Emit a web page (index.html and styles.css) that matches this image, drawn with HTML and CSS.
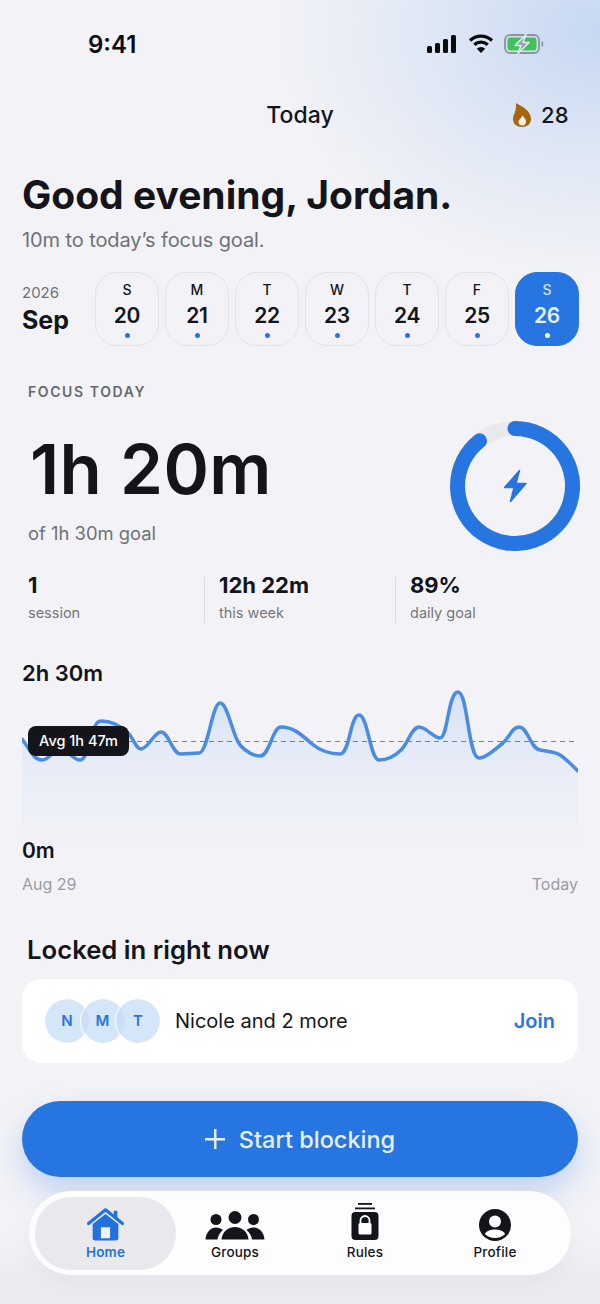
FILE: index.html

```html
<!DOCTYPE html>
<html>
	<head>
		<title>Today</title>
		<meta charset="UTF-8">
		<link rel="stylesheet" href="styles.css">
	</head>
	<body>
		<div id="screen">
			<!-- status bar -->
			<div class="status">
				<span class="clock">9:41</span>
				<div class="status-icons">
					<svg width="32" height="20" viewBox="0 0 32 20"><rect x="1" y="12" width="5" height="7" rx="1.5"/><rect x="9" y="9" width="5" height="10" rx="1.5"/><rect x="17" y="5" width="5" height="14" rx="1.5"/><rect x="25" y="1" width="5" height="18" rx="1.5"/></svg>
					<svg width="26" height="20" viewBox="0 0 26 20"><path d="M2 6.5 a16 16 0 0 1 22 0" class="wifi"/><path d="M6.3 10.8 a10 10 0 0 1 13.4 0" class="wifi"/><path d="M13 19 l-4.2 -4.3 a6 6 0 0 1 8.4 0 z"/></svg>
					<svg width="41" height="20" viewBox="0 0 41 20">
						<rect x="1" y="1" width="34" height="18" rx="5" fill="none" stroke="#8e939a" stroke-width="1.8"/>
						<rect x="3.5" y="3.5" width="29" height="13" rx="3" fill="#3dc25c"/>
						<path d="M37.500 7 c2.500 .3 2.500 5.700 0 6 z" fill="#8e939a"/>
						<path d="M22 0.5 L11 11.5 H17 L14 19.5 L25 8.5 H19 Z" fill="#9aa0a8" stroke="#e4e9f4" stroke-width="1.6" stroke-linejoin="round"/>
					</svg>
				</div>
			</div>

			<div class="topbar">
				<span class="topbar-title">Today</span>
				<div class="streak">
					<svg width="18" height="24" viewBox="0 0 18 24"><path d="M3 0 C8 3 18 7 18 16 C18 21 14 24 9 24 C4 24 0 21 0 16 C0 12 3.500 9 3 0 Z" fill="#a8650f"/><path d="M9.500 12 C10 14.500 13 15.500 13 18.500 C13 21 11.500 22.500 9.500 22.500 C7 22.500 5.500 21 5.500 19 C5.500 16.500 9 15 9.500 12 Z" fill="#f7f3ec"/></svg>
					<span>28</span>
				</div>
			</div>

			<div class="greeting">
				<h1>Good evening, Jordan.</h1>
				<p>10m to today’s focus goal.</p>
			</div>

			<div class="week">
				<div class="month">
					<span class="month-year">2026</span>
					<span class="month-name">Sep</span>
				</div>
				<div class="day"><span class="day-letter">S</span><span class="day-num">20</span><i class="dot"></i></div>
				<div class="day"><span class="day-letter">M</span><span class="day-num">21</span><i class="dot"></i></div>
				<div class="day"><span class="day-letter">T</span><span class="day-num">22</span><i class="dot"></i></div>
				<div class="day"><span class="day-letter">W</span><span class="day-num">23</span><i class="dot"></i></div>
				<div class="day"><span class="day-letter">T</span><span class="day-num">24</span><i class="dot"></i></div>
				<div class="day"><span class="day-letter">F</span><span class="day-num">25</span><i class="dot"></i></div>
				<div class="day active"><span class="day-letter">S</span><span class="day-num">26</span><i class="dot"></i></div>
			</div>

			<!-- focus summary -->
			<div class="focus">
				<div class="focus-text">
					<div class="focus-label">FOCUS TODAY</div>
					<div class="focus-time">1h 20m</div>
					<div class="focus-goal">of 1h 30m goal</div>
				</div>
				<svg class="ring" width="130" height="130" viewBox="0 0 130 130">
					<circle cx="65" cy="65" r="57.500" fill="none" stroke="#e9e9ed" stroke-width="15"/>
					<path d="M65 7.500 A57.500 57.500 0 1 1 29.500 19.800" fill="none" stroke="#2775e0" stroke-width="15" stroke-linecap="round"/>
					<path d="M69.500 49.500 L54.500 66.500 H64 L60.500 80.500 L76 62.500 H66 Z" fill="#2775e0" stroke="#2775e0" stroke-width="1.500" stroke-linejoin="round"/>
				</svg>
			</div>

			<div class="stats">
				<div class="stat"><b>1</b><span>session</span></div>
				<div class="stat"><b>12h 22m</b><span>this week</span></div>
				<div class="stat"><b>89%</b><span>daily goal</span></div>
			</div>

			<!-- history chart -->
			<div class="chart">
				<div class="chart-max">2h 30m</div>
				<div class="chart-plot">
					<svg width="556" height="160" viewBox="22 688 556 160">
						<defs>
							<linearGradient id="area" x1="0" y1="0" x2="0" y2="1">
								<stop offset="0" stop-color="#d3dff5" stop-opacity=".9"/>
								<stop offset="1" stop-color="#eef1f8" stop-opacity=".3"/>
							</linearGradient>
						</defs>
						<path fill="url(#area)" d="M22 739 C30 750 34 760 42 760 C50 760 52 750 60 749 C68 748 72 760 80 760 C90 760 90 721 101 721 C112 721 122 727 128 733 C134 739 136 749 141 749 C148 749 154 732 161 732 C169 732 172 754 181 754 L199 753 C208 753 212 703 220 703 C228 703 232 735 240 745 C246 752 254 756 260 756 C270 756 272 727 281 727 C292 727 300 733 312 744 C322 752 332 754 340 754 C350 754 350 715 359 715 C368 715 370 760 379 760 C388 760 394 757 401 750 C408 743 412 727 419 727 C426 727 434 738 440 738 C448 738 448 692 458 692 C468 692 468 758 479 758 C486 758 494 750 503 743 C510 737 512 727 519 727 C528 727 530 748 540 750 C550 752 555 752 560 755 C566 759 572 765 578 771 V848 H22 Z"/>
						<line x1="128" y1="741.500" x2="575" y2="741.500" stroke="#7d7f86" stroke-width="1.200" stroke-dasharray="5 4"/>
						<path fill="none" stroke="#4a8ce4" stroke-width="3.500" stroke-linecap="round" stroke-linejoin="round" d="M22 739 C30 750 34 760 42 760 C50 760 52 750 60 749 C68 748 72 760 80 760 C90 760 90 721 101 721 C112 721 122 727 128 733 C134 739 136 749 141 749 C148 749 154 732 161 732 C169 732 172 754 181 754 L199 753 C208 753 212 703 220 703 C228 703 232 735 240 745 C246 752 254 756 260 756 C270 756 272 727 281 727 C292 727 300 733 312 744 C322 752 332 754 340 754 C350 754 350 715 359 715 C368 715 370 760 379 760 C388 760 394 757 401 750 C408 743 412 727 419 727 C426 727 434 738 440 738 C448 738 448 692 458 692 C468 692 468 758 479 758 C486 758 494 750 503 743 C510 737 512 727 519 727 C528 727 530 748 540 750 C550 752 555 752 560 755 C566 759 572 765 578 771"/>
					</svg>
					<div class="avg-tag">Avg 1h 47m</div>
				</div>
				<div class="chart-min">0m</div>
				<div class="chart-range"><span>Aug 29</span><span>Today</span></div>
			</div>

			<h2 class="locked-title">Locked in right now</h2>
			<div class="locked-card">
				<div class="avatars">
					<span class="avatar">N</span>
					<span class="avatar">M</span>
					<span class="avatar">T</span>
				</div>
				<span class="locked-names">Nicole and 2 more</span>
				<span class="join">Join</span>
			</div>

			<div class="start"><span class="start-plus"></span>Start blocking</div>

			<!-- tab bar -->
			<div class="tabs">
				<div class="tab current">
					<svg width="37" height="33" viewBox="0 0 40 36"><path d="M1.500 17 L20 2 L38.500 17" fill="none" stroke="#2272de" stroke-width="3.500" stroke-linecap="round" stroke-linejoin="round"/><rect x="29" y="3" width="4" height="8" fill="#2272de"/><path d="M6 17.500 L20 6.500 L34 17.500 V33 a2.500 2.500 0 0 1 -2.500 2.500 H8.500 A2.500 2.500 0 0 1 6 33 Z" fill="#2272de"/><rect x="15" y="21" width="10" height="12" fill="#f2f2f5"/></svg>
					<span>Home</span>
				</div>
				<div class="tab">
					<svg width="60" height="30" viewBox="0 0 60 30"><circle cx="11" cy="8.500" r="5.500"/><circle cx="30" cy="6.500" r="6.500"/><circle cx="48.500" cy="8.500" r="5.500"/><path d="M0.500 28.500 C1 21 6 16.500 11 16.500 C14 16.500 16 17.500 18 19 C15 21.500 13 24.500 12.500 28.500 Z"/><path d="M59.500 28.500 C59 21 54 16.500 48.500 16.500 C45.500 16.500 43.500 17.500 41.500 19 C44.500 21.500 46.500 24.500 47 28.500 Z"/><path d="M16.500 28.500 C17 21 23 16 30 16 C37 16 43 21 43.500 28.500 Z"/></svg>
					<span>Groups</span>
				</div>
				<div class="tab">
					<svg width="28" height="38" viewBox="0 0 28 38"><rect x="7" y="0" width="14" height="1.800"/><rect x="4" y="4.500" width="20" height="1.800"/><path d="M4.500 9 H23.500 a4 4 0 0 1 4 4 V33 a4 4 0 0 1 -4 4 H4.500 a4 4 0 0 1 -4 -4 V13 a4 4 0 0 1 4 -4 Z"/><path d="M9.500 20 V17.500 a4.500 4.500 0 0 1 9 0 V20" fill="none" stroke="#fff" stroke-width="1.800"/><rect x="7.500" y="20" width="13" height="11.500" rx="1.500" fill="#fff"/></svg>
					<span>Rules</span>
				</div>
				<div class="tab">
					<svg width="32" height="32" viewBox="0 0 32 32"><circle cx="16" cy="16" r="16"/><circle cx="16" cy="12.500" r="6" fill="#fff"/><path d="M5.800 25 C8 21.500 12 20.500 16 20.500 C20 20.500 24 21.500 26.200 25 C23.500 27.800 20 29 16 29 C12 29 8.500 27.800 5.800 25 Z" fill="#fff"/></svg>
					<span>Profile</span>
				</div>
			</div>
		</div>
	</body>
</html>
```

FILE: styles.css

```css
/* common */
html, body {
	padding: 0; margin: 0; height: 100%;
}
* {
	box-sizing: border-box; font-family: "Inter", "Liberation Sans", sans-serif; color: #14151a;
}
#screen {
	width: 600px; height: 1304px; overflow: hidden; padding: 34px 22px 0; background-color: #f3f3f7;
	background-image:
		radial-gradient(ellipse 330px 250px at 600px 30px, #c6d8f2 0%, rgba(198, 216, 242, .45) 50%, rgba(198, 216, 242, 0) 100%),
		linear-gradient(to bottom, rgba(235, 236, 240, 0) 1235px, #ebecf0 1280px);
}
/* status */
.status {
	display: flex; justify-content: space-between; align-items: center; height: 20px; padding: 0 33px 0 66px;
}
.clock {
	font-size: 24px; font-weight: 600; color: #0b0b0d;
}
.status-icons {
	display: flex; gap: 10px; align-items: center;
}
.status-icons svg {
	fill: #0b0b0d;
}
.wifi {
	fill: none; stroke: #0b0b0d; stroke-width: 3.200;
}
.topbar {
	position: relative; display: flex; justify-content: flex-end; align-items: center; height: 30px; margin-top: 46px;
}
.topbar-title {
	position: absolute; left: 0; right: 0; text-align: center; font-size: 23px; font-weight: 500;
}
.streak {
	display: flex; gap: 10px; align-items: center; margin-right: 9.500px; font-size: 22px; font-weight: 500;
}
/* greeting */
.greeting h1 {
	margin: 40px 0 0; font-size: 39px; line-height: 50px; font-weight: 700;
}
.greeting p {
	margin: 5px 0 0; font-size: 20px; line-height: 30px; font-weight: 400; color: #6f7179; letter-spacing: -.1px;
}
/* week */
.week {
	display: flex; gap: 6px; margin-top: 17px; align-items: stretch;
}
.month {
	width: 67px; flex: none; display: flex; flex-direction: column; justify-content: center;
}
.month-year {
	font-size: 15px; color: #6f7179; line-height: 22px;
}
.month-name {
	font-size: 25px; font-weight: 700; line-height: 32px;
}
.day {
	width: 64px; flex: none; height: 74px; border: 1.500px solid #e2e3e8; border-radius: 22px; display: flex; flex-direction: column; align-items: center; padding-top: 8px;
}
.day-letter {
	font-size: 14px; font-weight: 500; line-height: 17px;
}
.day-num {
	font-size: 21px; font-weight: 600; line-height: 26px; margin-top: 5px; letter-spacing: -.3px;
}
.dot {
	width: 5px; height: 5px; border-radius: 50%; background-color: #2775e0; margin-top: 4px;
}
.day.active {
	background-color: #2775e0; border-color: #2775e0;
}
.day.active .day-letter {
	color: #cfe0f8;
}
.day.active .day-num {
	color: #e6effc;
}
.day.active .dot {
	background-color: white;
}
/* focus */
.focus {
	display: flex; justify-content: space-between; align-items: flex-start; margin: 36px -2px 0 0; padding: 0 0 0 6px;
}
.focus-label {
	font-size: 14px; font-weight: 600; letter-spacing: 1.600px; color: #66686f; line-height: 20px;
}
.focus-time {
	font-size: 69px; line-height: 80px; font-weight: 600; margin: 27px 0 0 2px; letter-spacing: .4px;
}
.focus-goal {
	font-size: 18.400px; line-height: 26px; color: #6f7179; margin-top: 11px;
}
.ring {
	margin-top: 39px;
}
.stats {
	display: grid; grid-template-columns: 176px 191px 1fr; margin-top: 26px; padding-left: 6px;
}
.stat {
	display: flex; flex-direction: column; border-left: 1px solid #dcdde2; padding-left: 14px; height: 46px;
}
.stat:first-child {
	border-left: none; padding-left: 0;
}
.stat b {
	font-size: 22px; line-height: 24px; font-weight: 700; margin-top: -4px;
}
.stat span {
	font-size: 14.500px; line-height: 22px; color: #74767d; margin-top: 5px;
}
/* chart */
.chart {
	margin-top: 35px;
}
.chart-max {
	font-size: 22px; font-weight: 600; line-height: 30px;
}
.chart-plot {
	position: relative; height: 160px;
}
.chart-plot svg {
	display: block;
}
.avg-tag {
	position: absolute; left: 6px; top: 38px; width: 101px; height: 30px; border-radius: 8px; background-color: #14151a; color: white; font-size: 14.500px; font-weight: 500; line-height: 30px; text-align: center;
}
.chart-min {
	font-size: 21px; font-weight: 600; line-height: 26px; margin-top: -10px; position: relative;
}
.chart-range {
	display: flex; justify-content: space-between; font-size: 16px; line-height: 24px; color: #9a9ca3; margin-top: 8px;
}
.chart-range span {
	color: #9a9ca3;
}
/* locked in */
.locked-title {
	margin: 37px 0 0 5px; font-size: 25.700px; line-height: 34px; font-weight: 600;
}
.locked-card {
	display: flex; align-items: center; height: 84px; margin-top: 12px; padding: 0 23px; background-color: white; border-radius: 20px;
}
.avatars {
	display: flex; width: 130px; margin-left: -1px; margin-right: 1px;
}
.avatar {
	width: 46px; height: 46px; margin-right: -10.500px; border: 1.500px solid white; background-clip: padding-box; border-radius: 50%; background-color: rgba(196, 219, 247, .7); color: #2775e0; font-size: 15px; font-weight: 600; line-height: 43px; text-align: center;
}
.locked-names {
	flex: 1; font-size: 20px; font-weight: 400;
}
.join {
	color: #2775e0; font-size: 20px; font-weight: 600;
}
/* start button */
.start {
	display: flex; justify-content: center; align-items: center; gap: 14px; height: 76px; margin-top: 38px; border-radius: 38px; background-color: #2775e0; color: #e6effc; font-size: 23.500px; font-weight: 500; box-shadow: 0 14px 30px rgba(39, 117, 224, .26);
}
.start-plus {
	width: 20px; height: 20px;
	background:
		linear-gradient(#e6effc, #e6effc) center / 100% 2.500px no-repeat,
		linear-gradient(#e6effc, #e6effc) center / 2.500px 100% no-repeat;
}
/* tabs */
.tabs {
	position: relative; display: grid; grid-template-columns: repeat(4, 130px); width: 542px; height: 84px; margin: 14px 0 0 7px; padding: 6px 11px; background-color: #fdfdfe; border-radius: 42px; box-shadow: 0 6px 20px rgba(120, 130, 150, .08);
}
.tab {
	display: flex; flex-direction: column; align-items: center; justify-content: flex-end; padding-bottom: 10px; font-size: 13.500px; font-weight: 500; letter-spacing: .2px; border-radius: 36px; height: 73px;
}
.tab svg {
	fill: #14151a; margin-bottom: 3px;
}
.tab.current {
	margin: 0 -6px 0 -5px; background-color: #e9e9ed;
}
.tab.current span {
	color: #2272de; font-weight: 600;
}
```
